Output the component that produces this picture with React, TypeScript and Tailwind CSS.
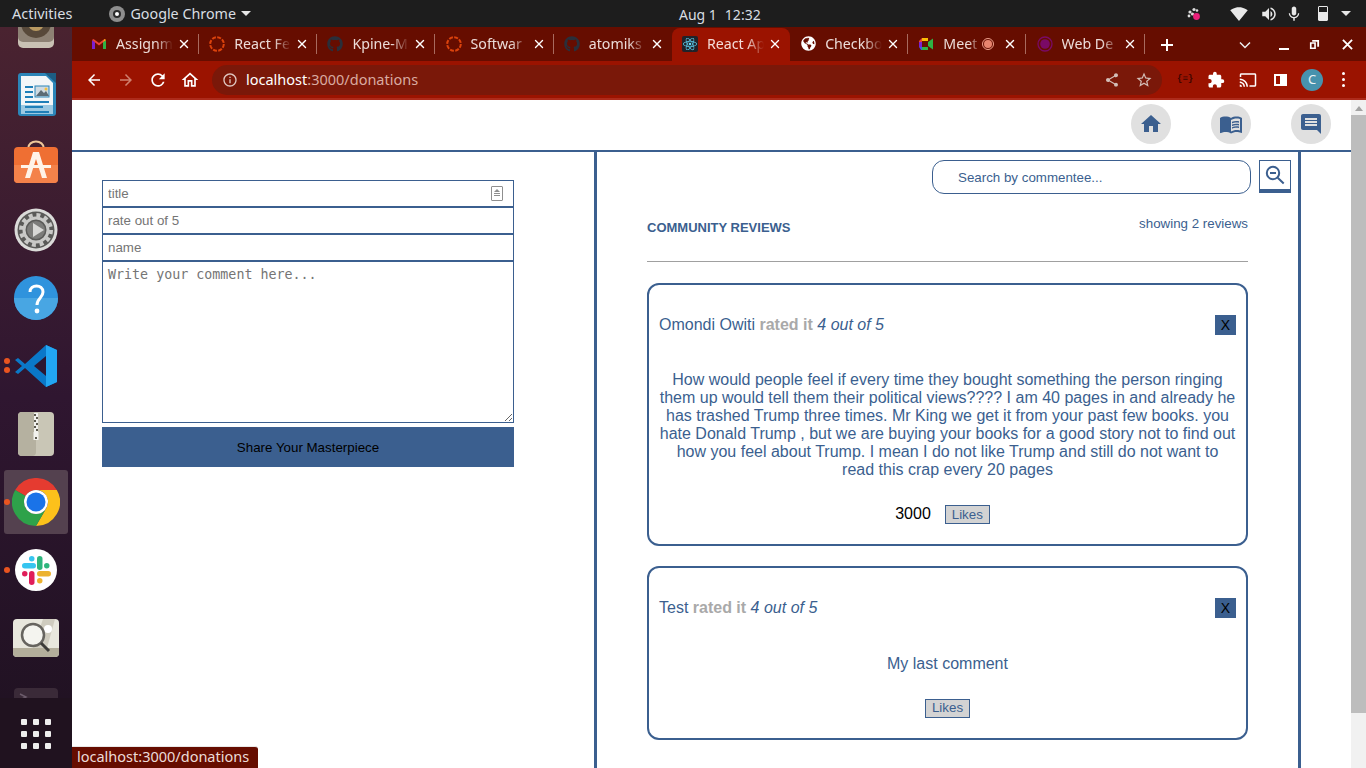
import type { ReactNode } from "react";
import { X } from "lucide-react";
import { FaGithub, FaGlobeAmericas, FaReact } from "react-icons/fa";
import {
  MdArrowBack,
  MdArrowForward,
  MdCast,
  MdExtension,
  MdHome,
  MdInfoOutline,
  MdMenuBook,
  MdMessage,
  MdMic,
  MdOutlineHome,
  MdRefresh,
  MdShare,
  MdSignalWifi4Bar,
  MdStarBorder,
  MdVolumeUp,
} from "react-icons/md";

const Spinner = () => (
  <svg viewBox="0 0 16 16" className="w-4 h-4">
    <circle cx="8" cy="8" r="6.8" fill="none" stroke="#dc430c" strokeWidth="2" strokeDasharray="4 1.340" />
  </svg>
);

const Gmail = () => (
  <svg viewBox="0 0 16 16" className="w-4 h-4">
    <path d="M1 13V4l3 2v7z" fill="#7b1fd1" />
    <path d="M12 13V6l3-2v9z" fill="#2fb344" />
    <path d="M1 4l1.500-1L8 7l5.500-4L15 4l-7 5.500z" fill="#ea4335" />
    <path d="M12 6l1.500-3L15 4z" fill="#fbbc04" />
  </svg>
);

const Meet = () => (
  <svg viewBox="0 0 16 16" className="w-4 h-4">
    <path d="M4 2h6v3H4z" fill="#fbbc04" />
    <path d="M1 5l3-3v4H1z" fill="#ea4335" />
    <path d="M1 6h3v5H1z" fill="#7b1fd1" />
    <path d="M1 11h3v3H3z" fill="#3b5fe0" />
    <path d="M4 11h6v3H4z" fill="#2fb344" />
    <path d="M10 2v12l0-4 5 3.500v-11L10 6z" fill="#2fb344" />
  </svg>
);

// titles are what the narrow tabs show, the last letters fade out
const tabs: { title: string; icon: ReactNode; active?: boolean; rec?: boolean; noSep?: boolean }[] = [
  { title: "Assignm", icon: <Gmail /> },
  { title: "React Fe", icon: <Spinner /> },
  { title: "Kpine-M", icon: <FaGithub className="w-4 h-4 text-[#2a2f3a]" /> },
  { title: "Softwar", icon: <Spinner /> },
  { title: "atomiks", icon: <FaGithub className="w-4 h-4 text-[#2a2f3a]" />, noSep: true },
  {
    title: "React Ap",
    active: true,
    noSep: true,
    icon: (
      <span className="w-4 h-4 rounded-[2px] bg-[#20232a] flex items-center justify-center">
        <FaReact className="w-[14px] h-[14px] text-[#61dafb]" />
      </span>
    ),
  },
  { title: "Checkbo", icon: <FaGlobeAmericas className="w-[15px] h-[15px] text-white" /> },
  { title: "Meet", icon: <Meet />, rec: true },
  {
    title: "Web De",
    icon: (
      <svg viewBox="0 0 16 16" className="w-4 h-4">
        <circle cx="8" cy="8" r="7" fill="none" stroke="#7a0a66" strokeWidth="1.300" />
        <circle cx="8" cy="8" r="4.800" fill="#7a0a66" />
      </svg>
    ),
  },
];

function Tab({ title, icon, active, rec, noSep }: (typeof tabs)[number]) {
  return (
    <div
      className={`w-[118.2px] h-full flex-none flex items-center pl-[10px] pb-[2px] ${
        active ? "bg-[#9b1300] rounded-t-lg" : ""
      }`}
    >
      <span className="w-4 h-4 flex-none flex items-center justify-center">{icon}</span>
      <span
        className={`ml-[9px] whitespace-nowrap text-[14.200px] [mask-image:linear-gradient(90deg,#000_70%,transparent)] ${
          rec ? "w-[37px]" : "w-[57px]"
        } ${active ? "text-[#f4dcd8]" : "text-[#ecdcd8]"}`}
      >
        {title}
      </span>
      {rec && (
        <span className="ml-[2px] w-3 h-3 flex-none rounded-full border border-[#f0a08c] flex items-center justify-center">
          <span className="w-2 h-2 rounded-full bg-[#e8846e]" />
        </span>
      )}
      <X className={`w-[14px] h-[14px] flex-none text-white ${rec ? "ml-[9px]" : "ml-[4px]"}`} strokeWidth={2.4} />
      <span className={`h-[20px] w-px flex-none ${rec ? "ml-[8px]" : "ml-[7px]"} ${noSep || active ? "" : "bg-[#a86a5e]"}`} />
    </div>
  );
}

function TopBar() {
  return (
    <div className="h-[27px] flex-none bg-[#1d1d1d] flex items-center text-[#d8dde2] text-[14.500px] relative">
      <span className="ml-[12px]">Activities</span>
      <span className="ml-[37px] w-4 h-4 rounded-full bg-[#8e8e8e] flex items-center justify-center">
        <span className="w-2 h-2 rounded-full border-2 border-[#2b2b2b] bg-white" />
      </span>
      <span className="ml-[5px] text-[14.300px]">Google Chrome</span>
      <span className="ml-[5px] w-0 h-0 border-x-[5px] border-x-transparent border-t-[5px] border-t-[#e6e6e6]" />
      <span className="absolute left-[679px] top-[4px] flex gap-[8px] text-[14px]">
        <span>Aug 1</span>
        <span>12:32</span>
      </span>
      <div className="ml-auto flex items-center text-[#e8e8e8]">
        <svg viewBox="0 0 16 16" className="w-4 h-4">
          <circle cx="4" cy="6" r="1.600" fill="#ddd" />
          <circle cx="8" cy="3.500" r="1.600" fill="#ddd" />
          <circle cx="3" cy="10" r="1.400" fill="#ddd" />
          <circle cx="6.500" cy="8" r="1.600" fill="#ddd" />
          <circle cx="11" cy="4.500" r="1.300" fill="#ddd" />
          <circle cx="10.500" cy="10.500" r="3.400" fill="#e9207a" />
        </svg>
        <MdSignalWifi4Bar className="ml-[28px] w-[18px] h-[18px]" />
        <MdVolumeUp className="ml-[12px] w-[18px] h-[18px]" />
        <MdMic className="ml-[7px] w-[18px] h-[18px]" />
        <span className="ml-[15px] w-[10px] h-[15px] border border-[#e8e8e8] rounded-[1px] flex items-end">
          <span className="w-full h-[8px] bg-[#e8e8e8]" />
        </span>
        <span className="ml-[13px] mr-[15px] w-0 h-0 border-x-[5px] border-x-transparent border-t-[5px] border-t-[#e6e6e6]" />
      </div>
    </div>
  );
}

function ChromeBar() {
  return (
    <div className="flex-none">
      <div className="h-[34px] bg-[#660d00] flex items-end">
        <div className="flex h-[33px] pl-[9px]">
          {tabs.map((t) => (
            <Tab key={t.title} {...t} />
          ))}
        </div>
        <div className="h-[33px] flex-1 flex items-center text-white">
          <svg viewBox="0 0 14 14" className="ml-[15px] w-[14px] h-[14px]">
            <path d="M7 1v12M1 7h12" stroke="#fff" strokeWidth="2" />
          </svg>
          <svg viewBox="0 0 12 8" className="ml-[65px] w-[12px] h-[8px]">
            <path d="M1 1.500l5 5 5-5" stroke="#eee" strokeWidth="1.500" fill="none" />
          </svg>
          <span className="ml-[28px] mt-[8px] w-[10px] h-[2px] bg-white" />
          <svg viewBox="0 0 12 12" className="ml-[20px] w-[11px] h-[11px]">
            <path d="M3.500 1h7.500v7.500H9V3H3.500z M1 3.500h6.500V11H1z M2.800 5.300v3.900h2.900V5.300z" fill="#fff" fillRule="evenodd" />
          </svg>
          <svg viewBox="0 0 12 12" className="ml-[22px] w-[11px] h-[11px]">
            <path d="M1 1l10 10M11 1L1 11" stroke="#fff" strokeWidth="2" />
          </svg>
        </div>
      </div>
      <div className="h-[39px] bg-[#9b1300] border-b-2 border-[#ad2b1b] flex items-center text-white">
        <div className="w-[140px] flex-none flex items-center pl-[13px]">
          <MdArrowBack className="w-[18px] h-[18px]" />
          <MdArrowForward className="ml-[14px] w-[18px] h-[18px] text-[#d0816f]" />
          <MdRefresh className="ml-[13px] w-[20px] h-[20px]" />
          <MdOutlineHome className="ml-[12px] w-[20px] h-[20px]" />
        </div>
        <div className="w-[950px] h-[30px] flex-none rounded-full bg-[#7a1809] flex items-center pl-[10px] pr-[9px]">
          <MdInfoOutline className="w-4 h-4 text-[#e0c8c2]" />
          <span className="ml-[8px] text-[14.500px] text-white">
            localhost<span className="text-[#d9aaa0]">:3000/donations</span>
          </span>
          <MdShare className="ml-auto w-4 h-4 text-[#d3bdb7]" />
          <MdStarBorder className="ml-[15px] w-[18px] h-[18px] text-[#d3bdb7]" />
        </div>
        <span className="ml-[15px] w-[14px] text-[9px] font-bold text-[#3d0500] whitespace-nowrap font-['Liberation_Mono',monospace]">
          {"{≡}"}
        </span>
        <MdExtension className="ml-[16px] w-[18px] h-[18px]" />
        <MdCast className="ml-[14px] w-[18px] h-[18px]" />
        <span className="ml-[17px] w-[13px] h-[12px] border-2 border-white flex justify-end">
          <span className="w-[5px] h-full bg-white" />
        </span>
        <span className="ml-[14px] w-[22px] h-[22px] rounded-full bg-[#4792ad] text-[#eaf4f7] text-[13px] flex items-center justify-center">
          C
        </span>
        <span className="ml-[19px] flex flex-col gap-[3px]">
          <span className="w-[3px] h-[3px] rounded-full bg-white" />
          <span className="w-[3px] h-[3px] rounded-full bg-white" />
          <span className="w-[3px] h-[3px] rounded-full bg-white" />
        </span>
      </div>
    </div>
  );
}

const dockIcons: { key: string; size: string; box: string; pip?: number; active?: boolean; svg: ReactNode }[] = [
  {
    key: "speaker",
    size: "w-[44px] h-[44px]",
    box: "0 0 44 44",
    svg: (
      <>
        <rect x="4" y="2" width="36" height="42" rx="5" fill="#c9c1b4" />
        <rect x="4" y="2" width="36" height="36" rx="5" fill="#8d8174" />
        <circle cx="22" cy="19" r="15" fill="#58493a" />
        <circle cx="22" cy="19" r="8" fill="#b99a62" />
      </>
    ),
  },
  {
    key: "writer",
    size: "w-[44px] h-[44px]",
    box: "0 0 44 44",
    svg: (
      <>
        <path d="M4 4a3 3 0 0 1 3-3h26l9 9v31a3 3 0 0 1-3 3H7a3 3 0 0 1-3-3z" fill="#2b85b8" />
        <path d="M7 4h25l7 7v24H7z" fill="#f2f6f8" />
        <path d="M31 1h11v10z" fill="#1c5d83" />
        <path d="M7 33h32v9H7z" fill="#9cc9e2" />
        <path d="M11 14h8v2h-8zM11 19h8v2h-8zM11 24h8v2h-8zM11 29h24v2H11zM11 34h18v2H11zM11 39h24v2H11z" fill="#1f7fb8" />
        <rect x="21" y="14" width="14" height="11" fill="#cfdbe2" stroke="#2b85b8" />
        <path d="M22 24l5-6 3 3 2-2 3 5z" fill="#5b6b75" />
        <circle cx="32" cy="17" r="1.500" fill="#f0c040" />
      </>
    ),
  },
  {
    key: "appstore",
    size: "w-[44px] h-[44px]",
    box: "0 0 44 44",
    svg: (
      <>
        <path d="M14 9C14 -1 30 -1 30 9" fill="none" stroke="#eec79a" strokeWidth="2" />
        <rect x="0" y="7" width="44" height="36" rx="4" fill="#ef6f33" />
        <path d="M0 25h44v14a4 4 0 0 1-4 4H4a4 4 0 0 1-4-4z" fill="#f4824a" />
        <path d="M19 12h6l8 26h-5l-6-19-6 19h-5z" fill="#fff3e8" />
        <path d="M7 25h30v3H7z" fill="#fff3e8" />
      </>
    ),
  },
  {
    key: "settings",
    size: "w-[44px] h-[44px]",
    box: "0 0 44 44",
    svg: (
      <>
        <circle cx="22" cy="22" r="21.500" fill="#dbdbd9" />
        <circle cx="22" cy="22" r="18.500" fill="#5a5a58" />
        <circle cx="22" cy="22" r="12" fill="none" stroke="#c9c9c7" strokeWidth="3" />
        <circle cx="22" cy="22" r="15" fill="none" stroke="#c9c9c7" strokeWidth="4" strokeDasharray="4 3.850" />
        <circle cx="22" cy="22" r="9" fill="#7c7c7a" />
        <path d="M19 15l11 7-11 7z" fill="#d7d7d5" />
      </>
    ),
  },
  {
    key: "help",
    size: "w-[44px] h-[44px]",
    box: "0 0 44 44",
    svg: (
      <>
        <circle cx="22" cy="22" r="22" fill="#2f93dd" />
        <path d="M0 22a22 22 0 0 0 44 0z" fill="#48a6e3" />
        <path d="M16 16c0-8 13-8 13 0 0 6-6 6-6 13" fill="none" stroke="#fff" strokeWidth="3" />
        <circle cx="23" cy="35" r="2.400" fill="#fff" />
      </>
    ),
  },
  {
    key: "vscode",
    size: "w-[44px] h-[44px]",
    box: "0 0 44 44",
    pip: 2,
    svg: (
      <>
        <path d="M32 1l11 5v32l-11 5L11 24 4 30l-3-2 7-6-7-6 3-2 7 6z" fill="#0a78c8" />
        <path d="M32 1l11 5v32l-11 5z" fill="#22a6f2" />
        <path d="M32 12L20 22l12 10z" fill="#2c1731" />
      </>
    ),
  },
  {
    key: "archive",
    size: "w-[44px] h-[44px]",
    box: "0 0 44 44",
    svg: (
      <>
        <rect x="4" y="0" width="36" height="44" rx="4" fill="#c9c6b6" />
        <rect x="4" y="0" width="18" height="44" rx="4" fill="#b5b1a0" />
        <path d="M20 1h4v21h-4z" fill="#f2f2ee" />
        <path d="M20 2h2v2h-2zM22 5h2v2h-2zM20 8h2v2h-2zM22 11h2v2h-2zM20 14h2v2h-2zM22 17h2v2h-2z" fill="#5d5a50" />
        <rect x="19.500" y="20" width="5" height="8" fill="#f2f2ee" />
        <rect x="21" y="25" width="2" height="2" fill="#5d5a50" />
      </>
    ),
  },
  {
    key: "chrome",
    size: "w-[48px] h-[48px]",
    box: "0 0 48 48",
    pip: 1,
    active: true,
    svg: (
      <>
        <path d="M3.200 12A24 24 0 0 1 44.800 12H24a12 12 0 0 0-10.400 6z" fill="#e53b30" />
        <path d="M44.800 12A24 24 0 0 1 24 48l10.400-18A12 12 0 0 0 24 12z" fill="#fcc11b" />
        <path d="M24 48A24 24 0 0 1 3.200 12l10.400 6a12 12 0 0 0 20.800 12z" fill="#2ea24a" />
        <circle cx="24" cy="24" r="12" fill="#fff" />
        <circle cx="24" cy="24" r="9.500" fill="#1a73e8" />
      </>
    ),
  },
  {
    key: "slack",
    size: "w-[42px] h-[42px]",
    box: "0 0 42 42",
    pip: 1,
    svg: (
      <>
        <circle cx="21" cy="21" r="21" fill="#fff" />
        <rect x="7" y="14" width="14" height="5.500" rx="2.750" fill="#36c5f0" />
        <rect x="14" y="7" width="5.500" height="5.500" rx="2.750" fill="#36c5f0" />
        <rect x="22" y="7" width="5.500" height="14" rx="2.750" fill="#2eb67d" />
        <rect x="29" y="14" width="5.500" height="5.500" rx="2.750" fill="#2eb67d" />
        <rect x="22" y="22" width="14" height="5.500" rx="2.750" fill="#ecb22e" />
        <rect x="22" y="29" width="5.500" height="5.500" rx="2.750" fill="#ecb22e" />
        <rect x="14" y="22" width="5.500" height="14" rx="2.750" fill="#e01e5a" />
        <rect x="7" y="22" width="5.500" height="5.500" rx="2.750" fill="#e01e5a" />
      </>
    ),
  },
  {
    key: "viewer",
    size: "w-[46px] h-[46px]",
    box: "0 0 46 46",
    svg: (
      <>
        <rect x="0" y="4" width="46" height="38" rx="4" fill="#e8e7dd" />
        <path d="M0 33h46v5a4 4 0 0 1-4 4H4a4 4 0 0 1-4-4z" fill="#b3ae9b" />
        <path d="M30 4h12l-8 29H20z" fill="#cfccbf" />
        <circle cx="35" cy="14" r="4" fill="#fff" />
        <circle cx="20" cy="20" r="11" fill="#f4f4ef" stroke="#66645f" strokeWidth="2.500" />
        <path d="M28 28l8 8" stroke="#3c3b38" strokeWidth="3" />
      </>
    ),
  },
  {
    key: "terminal",
    size: "w-[44px] h-[44px]",
    box: "0 0 44 44",
    svg: (
      <>
        <rect x="0" y="4" width="44" height="38" rx="4" fill="#3a2a38" />
        <path d="M6 10l6 3-6 3" stroke="#6c5c6c" strokeWidth="1.500" fill="none" />
      </>
    ),
  },
];

function Dock() {
  return (
    <div className="w-[72px] flex-none relative overflow-hidden bg-gradient-to-b from-[#4a2330] via-[#2f1630] to-[#1e1120]">
      <div className="mt-[-35px] flex flex-col">
        {dockIcons.map((d) => (
          <div key={d.key} className="h-[68px] flex-none relative flex items-center justify-center">
            {d.active && <span className="absolute left-[4px] top-[2px] w-[64px] h-[64px] rounded-[3px] bg-[#54414f]" />}
            {d.pip === 1 && <span className="absolute left-[4px] top-[31px] w-[6px] h-[6px] rounded-full bg-[#e95420]" />}
            {d.pip === 2 && (
              <span className="absolute left-[4px] top-[26px] flex flex-col gap-[3px]">
                <span className="w-[6px] h-[6px] rounded-full bg-[#e95420]" />
                <span className="w-[6px] h-[6px] rounded-full bg-[#e95420]" />
              </span>
            )}
            <svg viewBox={d.box} className={`${d.size} relative`}>
              {d.svg}
            </svg>
          </div>
        ))}
      </div>
      {/* app grid sits over the clipped terminal icon */}
      <div className="absolute left-0 bottom-0 w-full h-[70px] pt-[2px] bg-[#20121f] flex items-center justify-center">
        <div className="grid grid-cols-3 gap-[6px]">
          {Array.from({ length: 9 }).map((_, i) => (
            <span key={i} className="w-[6px] h-[6px] rounded-[1px] bg-[#efeeee]" />
          ))}
        </div>
      </div>
    </div>
  );
}

function ReviewForm() {
  const field =
    "w-full h-[27px] block border border-[#3b5f8f] px-[5px] text-[13.333px] bg-white outline-none placeholder:text-[#757575]";
  return (
    <div className="w-[522px] flex-none pl-[30px] pt-[28px]">
      <div className="w-[412px]">
        <div className="relative">
          <input className={field} placeholder="title" />
          <span className="absolute right-[11px] top-[6px] w-[12px] h-[15px] border-[1.500px] border-[#8f8f8f] rounded-[1px] flex flex-col items-center pt-[2px] gap-[1px]">
            <span className="w-0 h-0 border-x-[3px] border-x-transparent border-b-[3px] border-b-[#8f8f8f]" />
            <span className="w-[6px] h-[1px] bg-[#8f8f8f]" />
            <span className="w-[6px] h-[1px] bg-[#8f8f8f]" />
          </span>
        </div>
        <input className={field} placeholder="rate out of 5" />
        <input className={field} placeholder="name" />
        <textarea
          className="w-full h-[162px] block border border-[#3b5f8f] px-[5px] pt-[5px] pb-[3px] text-[13.333px] leading-[15px] font-['DejaVu_Sans_Mono',monospace] outline-none placeholder:text-[#757575]"
          placeholder="Write your comment here..."
        />
        <button className="mt-[4px] w-full h-[40px] pt-[1px] bg-[#3b5f8f] text-[13.333px] text-black">Share Your Masterpiece</button>
      </div>
    </div>
  );
}

function ReviewCard({ name, body, likes }: { name: string; body: string; likes?: number }) {
  return (
    <div className="border-2 border-[#3b5f8f] rounded-[12px] px-[10px] pt-[30px] pb-[20px] text-[#3b5f8f]">
      <div className="flex items-center justify-between h-[20px] text-[16px]">
        <p>
          {name} <b className="text-[#a9a9a9]">rated it</b> <i>4 out of 5</i>
        </p>
        <button className="w-[21px] h-[20px] bg-[#3b5f8f] text-black text-[14px] leading-[20px]">X</button>
      </div>
      <p className="mt-[36.4px] text-center text-[16px] leading-[18px]">{body}</p>
      <div className="mt-[26px] h-[19px] flex items-center justify-center">
        {likes && <span className="ml-[-10px] mr-[14px] mb-[2px] text-[16px] text-black">{likes}</span>}
        <button className="w-[45px] h-[19px] bg-[#d3d3d3] border border-[#3b5f8f] text-[13.333px] leading-[16px]">Likes</button>
      </div>
    </div>
  );
}

function Reviews() {
  return (
    <div className="w-[707px] h-full flex-none border-x-[3px] border-[#3b5f8f] text-[#3b5f8f] pt-[8px]">
      <div className="flex justify-end gap-[8px] pr-[7px]">
        <div className="w-[319px] h-[34px] pt-[1px] border border-[#3b5f8f] rounded-[12px] pl-[25px] flex items-center text-[13.333px]">
          Search by commentee...
        </div>
        <button className="w-[32px] h-[33px] border border-[#3b5f8f] border-b-[4px] flex items-center justify-center">
          <svg viewBox="0 0 22 22" className="w-[22px] h-[22px]">
            <circle cx="9" cy="9" r="6.200" fill="none" stroke="#3b5f8f" strokeWidth="2" />
            <path d="M6 9h6M13.700 13.700l6 5.800" stroke="#3b5f8f" strokeWidth="2" />
          </svg>
        </button>
      </div>
      <div className="ml-[50px] w-[601px] mt-[22px]">
        <div className="flex justify-between items-start">
          <h2 className="mt-[4px] text-[13px] font-bold leading-[15px]">COMMUNITY REVIEWS</h2>
          <span className="text-[13.333px] leading-[15px]">showing 2 reviews</span>
        </div>
        <div className="mt-[26px] h-px bg-[#a0a0a0]" />
        <div className="mt-[21px] flex flex-col gap-[20px]">
          <ReviewCard
            name="Omondi Owiti"
            likes={3000}
            body="How would people feel if every time they bought something the person ringing them up would tell them their political views???? I am 40 pages in and already he has trashed Trump three times. Mr King we get it from your past few books. you hate Donald Trump , but we are buying your books for a good story not to find out how you feel about Trump. I mean I do not like Trump and still do not want to read this crap every 20 pages"
          />
          <ReviewCard name="Test" body="My last comment" />
        </div>
      </div>
    </div>
  );
}

function Page() {
  return (
    <div className="flex-1 min-h-0 flex bg-white relative font-['Liberation_Sans',Arial,sans-serif]">
      <div className="flex-1 min-w-0 flex flex-col">
        <div className="h-[52px] flex-none border-b-[2px] border-[#3b5f8f] flex items-center justify-end gap-[40px] pr-[20px] pb-[2px]">
          <span className="w-10 h-10 rounded-full bg-[#e0e0e0] flex items-center justify-center">
            <MdHome className="w-6 h-6 text-[#3b5f8f]" />
          </span>
          <span className="w-10 h-10 rounded-full bg-[#e0e0e0] flex items-center justify-center">
            <MdMenuBook className="w-6 h-6 text-[#3b5f8f]" />
          </span>
          <span className="w-10 h-10 rounded-full bg-[#e0e0e0] flex items-center justify-center">
            <MdMessage className="w-6 h-6 text-[#3b5f8f] -scale-x-100" />
          </span>
        </div>
        <div className="flex-1 min-h-0 flex overflow-hidden">
          <ReviewForm />
          <Reviews />
        </div>
      </div>
      <div className="w-[15px] flex-none bg-[#f1f1f1] flex flex-col items-center">
        <span className="mt-[6px] w-0 h-0 border-x-[4px] border-x-transparent border-b-[5px] border-b-[#a3a3a3]" />
        <span className="mt-[4px] w-full h-[598px] bg-[#bdbdbd]" />
      </div>
      <div className="absolute left-0 bottom-0 h-[22px] w-[186px] pb-[2px] bg-[#660d00] rounded-tr-[3px] border-t border-[#e8e8e8] flex items-center pl-[5px] text-[14.500px] text-[#ecdcd8] font-['Noto_Sans',sans-serif]">
        localhost:3000/donations
      </div>
    </div>
  );
}

export default function App() {
  return (
    <div className="w-[1366px] h-[768px] overflow-hidden flex flex-col font-['Noto_Sans',sans-serif]">
      <TopBar />
      <div className="flex-1 min-h-0 flex">
        <Dock />
        <div className="flex-1 min-w-0 flex flex-col">
          <ChromeBar />
          <Page />
        </div>
      </div>
    </div>
  );
}
